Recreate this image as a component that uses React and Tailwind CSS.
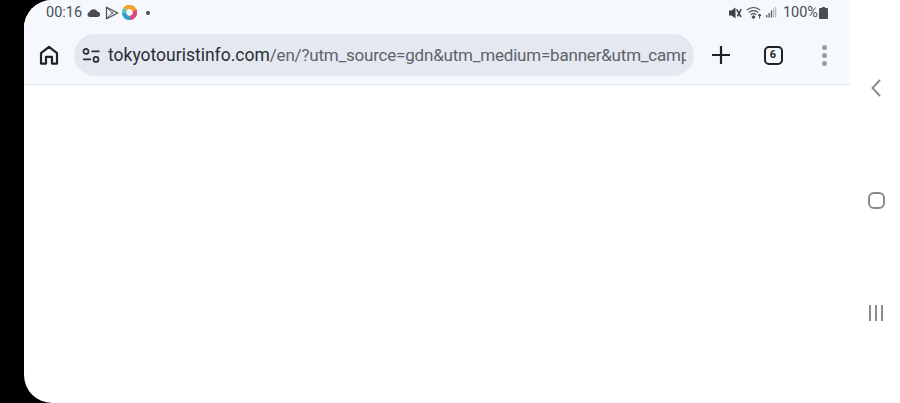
const URL_REST = '/en/?utm_source=gdn&utm_medium=banner&utm_campa'

function StatusBar() {
  return (
    <div className="h-[26px] shrink-0 flex items-center pl-[22px] pr-[22px] pb-[1px] text-[#4a4d52] text-[14.5px]">
      <span className="w-[37px]">00:16</span>
      <svg width="14" height="8" viewBox="0 0 14 8" className="ml-[4px]" fill="#4a4d52">
        <path d="M2.6 8A2.5 2.5 0 0 1 2.4 3.1 4.4 4.4 0 0 1 10.5 2.7 2.7 2.7 0 0 1 11.2 8z" />
      </svg>
      <svg width="14" height="14" viewBox="0 0 14 14" className="ml-[4px]" fill="none" stroke="#4a4d52" strokeWidth="1.2" strokeLinejoin="round">
        <path d="M1.5 1.2v11.6L12.8 7z" />
        <path d="M1.5 1.2L8.5 8M1.5 12.8l7-7" strokeWidth="1" />
      </svg>
      <svg width="15" height="15" viewBox="0 0 15 15" className="ml-[3px]" fill="none" strokeWidth="4.4">
        <path d="M3.2 4A5.4 5.4 0 0 1 12.6 5.4" stroke="#f0a32e" />
        <path d="M12.6 5.4A5.4 5.4 0 0 1 8 12.9" stroke="#e0457a" />
        <path d="M8 12.9A5.4 5.4 0 0 1 2.1 7.5" stroke="#2f9fd0" />
        <path d="M2.1 7.5A5.4 5.4 0 0 1 3.2 4" stroke="#5cc8b4" />
      </svg>
      <span className="ml-[9px] w-1 h-1 rounded-full bg-[#4a4d52]" />

      <div className="ml-auto flex items-center">
        <svg width="13" height="12" viewBox="0 0 13 12" fill="#3f4247">
          <path d="M0 3.5h2.5L6.5 .5v11l-4-3H0z" />
          <path d="M7.6 2.4l4.4 7.6M12.2 2.2L8.4 9.4" stroke="#3f4247" strokeWidth="1.5" />
        </svg>
        <svg width="17" height="13" viewBox="0 0 17 13" className="ml-[4px]" fill="none" stroke="#4a4d52" strokeWidth="1.1">
          <path d="M.8 4.2a9.6 9.6 0 0 1 13.4 0" />
          <path d="M2.8 6.6a6.6 6.6 0 0 1 9.4 0" />
          <path d="M4.8 8.8a3.8 3.8 0 0 1 5.4 0" />
          <path d="M7.5 12.4l1.3-1.3-1.3-1.3-1.3 1.3z" fill="#4a4d52" />
          <path d="M13.6 8.4v4M12.2 9.6l1.4-1.4 1.4 1.4" />
        </svg>
        <svg width="11" height="11" viewBox="0 0 11 11" className="ml-[3px]" fill="#5f6368">
          <rect x="0" y="8" width="1.4" height="2.5" />
          <rect x="2.4" y="6" width="1.4" height="4.5" />
          <rect x="4.8" y="3.5" width="1.4" height="7" />
          <rect x="7.2" y="1.5" width="1" height="9" opacity="0.5" />
          <rect x="9.2" y="0" width="1" height="10.5" opacity="0.5" />
        </svg>
        <span className="ml-[6px]">100%</span>
        <svg width="9" height="12" viewBox="0 0 9 12" className="ml-[1px]" fill="#4a4d52">
          <path d="M3 0h3v1h2a1 1 0 0 1 1 1v9a1 1 0 0 1-1 1H1a1 1 0 0 1-1-1V2a1 1 0 0 1 1-1h2z" />
        </svg>
      </div>
    </div>
  )
}

function Toolbar() {
  return (
    <div className="h-[59px] shrink-0 flex items-center border-b border-[#e0e4ea]">
      <div className="w-[50px] flex justify-center">
        <svg width="20" height="20" viewBox="0 0 20 20" fill="none" stroke="#1f2328" strokeWidth="2.2" strokeLinejoin="round">
          <path d="M2 8.2L10 1.8l8 6.4V18.6h-5v-6.8H7v6.8H2z" />
        </svg>
      </div>
      <div className="w-[620px] h-[42px] rounded-full bg-[#e4e8f1] flex items-center pl-[8px] pr-[8px]">
        <svg width="18" height="15" viewBox="0 0 18 15" fill="none" stroke="#2a2d32" strokeWidth="1.7" className="shrink-0">
          <circle cx="4" cy="3.4" r="2.5" />
          <path d="M9.5 3.4h8" />
          <path d="M1 11.4h8" />
          <circle cx="14" cy="11.4" r="2.5" />
        </svg>
        <div className="ml-[8px] pt-[1px] flex-1 overflow-hidden whitespace-nowrap text-[17px] tracking-[-0.2px] text-[#5f6368]">
          <span className="text-[17.5px] tracking-normal text-[#2a2d32]">tokyotouristinfo.com</span>{URL_REST}
        </div>
      </div>
      <div className="w-[54px] flex justify-center">
        <svg width="18" height="18" viewBox="0 0 18 18" stroke="#1f2328" strokeWidth="2.2">
          <path d="M9 0v18M0 9h18" />
        </svg>
      </div>
      <div className="w-[50px] flex justify-center">
        <div className="w-[19px] h-[19px] rounded-[5px] border-2 border-[#1f2328] flex items-center justify-center text-[11px] font-bold text-[#1f2328]">6</div>
      </div>
      <div className="w-[52px] flex flex-col items-center gap-[3px]">
        <span className="w-[5px] h-[5px] rounded-full bg-[#9a9ea3]" />
        <span className="w-[5px] h-[5px] rounded-full bg-[#9a9ea3]" />
        <span className="w-[5px] h-[5px] rounded-full bg-[#9a9ea3]" />
      </div>
    </div>
  )
}

function NavBar() {
  return (
    <div className="w-[50px] shrink-0 bg-white flex flex-col items-center pt-[79px]">
      <svg width="10" height="18" viewBox="0 0 10 18" fill="none" stroke="#8a8a8a" strokeWidth="1.9" className="ml-[2px]">
        <path d="M9 1L1.5 9 9 17" />
      </svg>
      <div className="mt-[95px] ml-[2px] w-[17px] h-[17px] rounded-[6px] border-2 border-[#8a8a8a]" />
      <div className="mt-[96px] ml-[2px] flex gap-[4px]">
        <span className="w-[2px] h-[16px] bg-[#8a8a8a]" />
        <span className="w-[2px] h-[16px] bg-[#8a8a8a]" />
        <span className="w-[2px] h-[16px] bg-[#8a8a8a]" />
      </div>
    </div>
  )
}

export default function App() {
  return (
    <div className="w-[900px] h-[403px] bg-black flex overflow-hidden font-['Roboto',sans-serif]">
      <div className="w-6 shrink-0" />
      <div className="flex-1 bg-white rounded-l-[28px] overflow-hidden">
        <div className="bg-[#f5f9fe]">
          <StatusBar />
          <Toolbar />
        </div>
      </div>
      <NavBar />
    </div>
  )
}
